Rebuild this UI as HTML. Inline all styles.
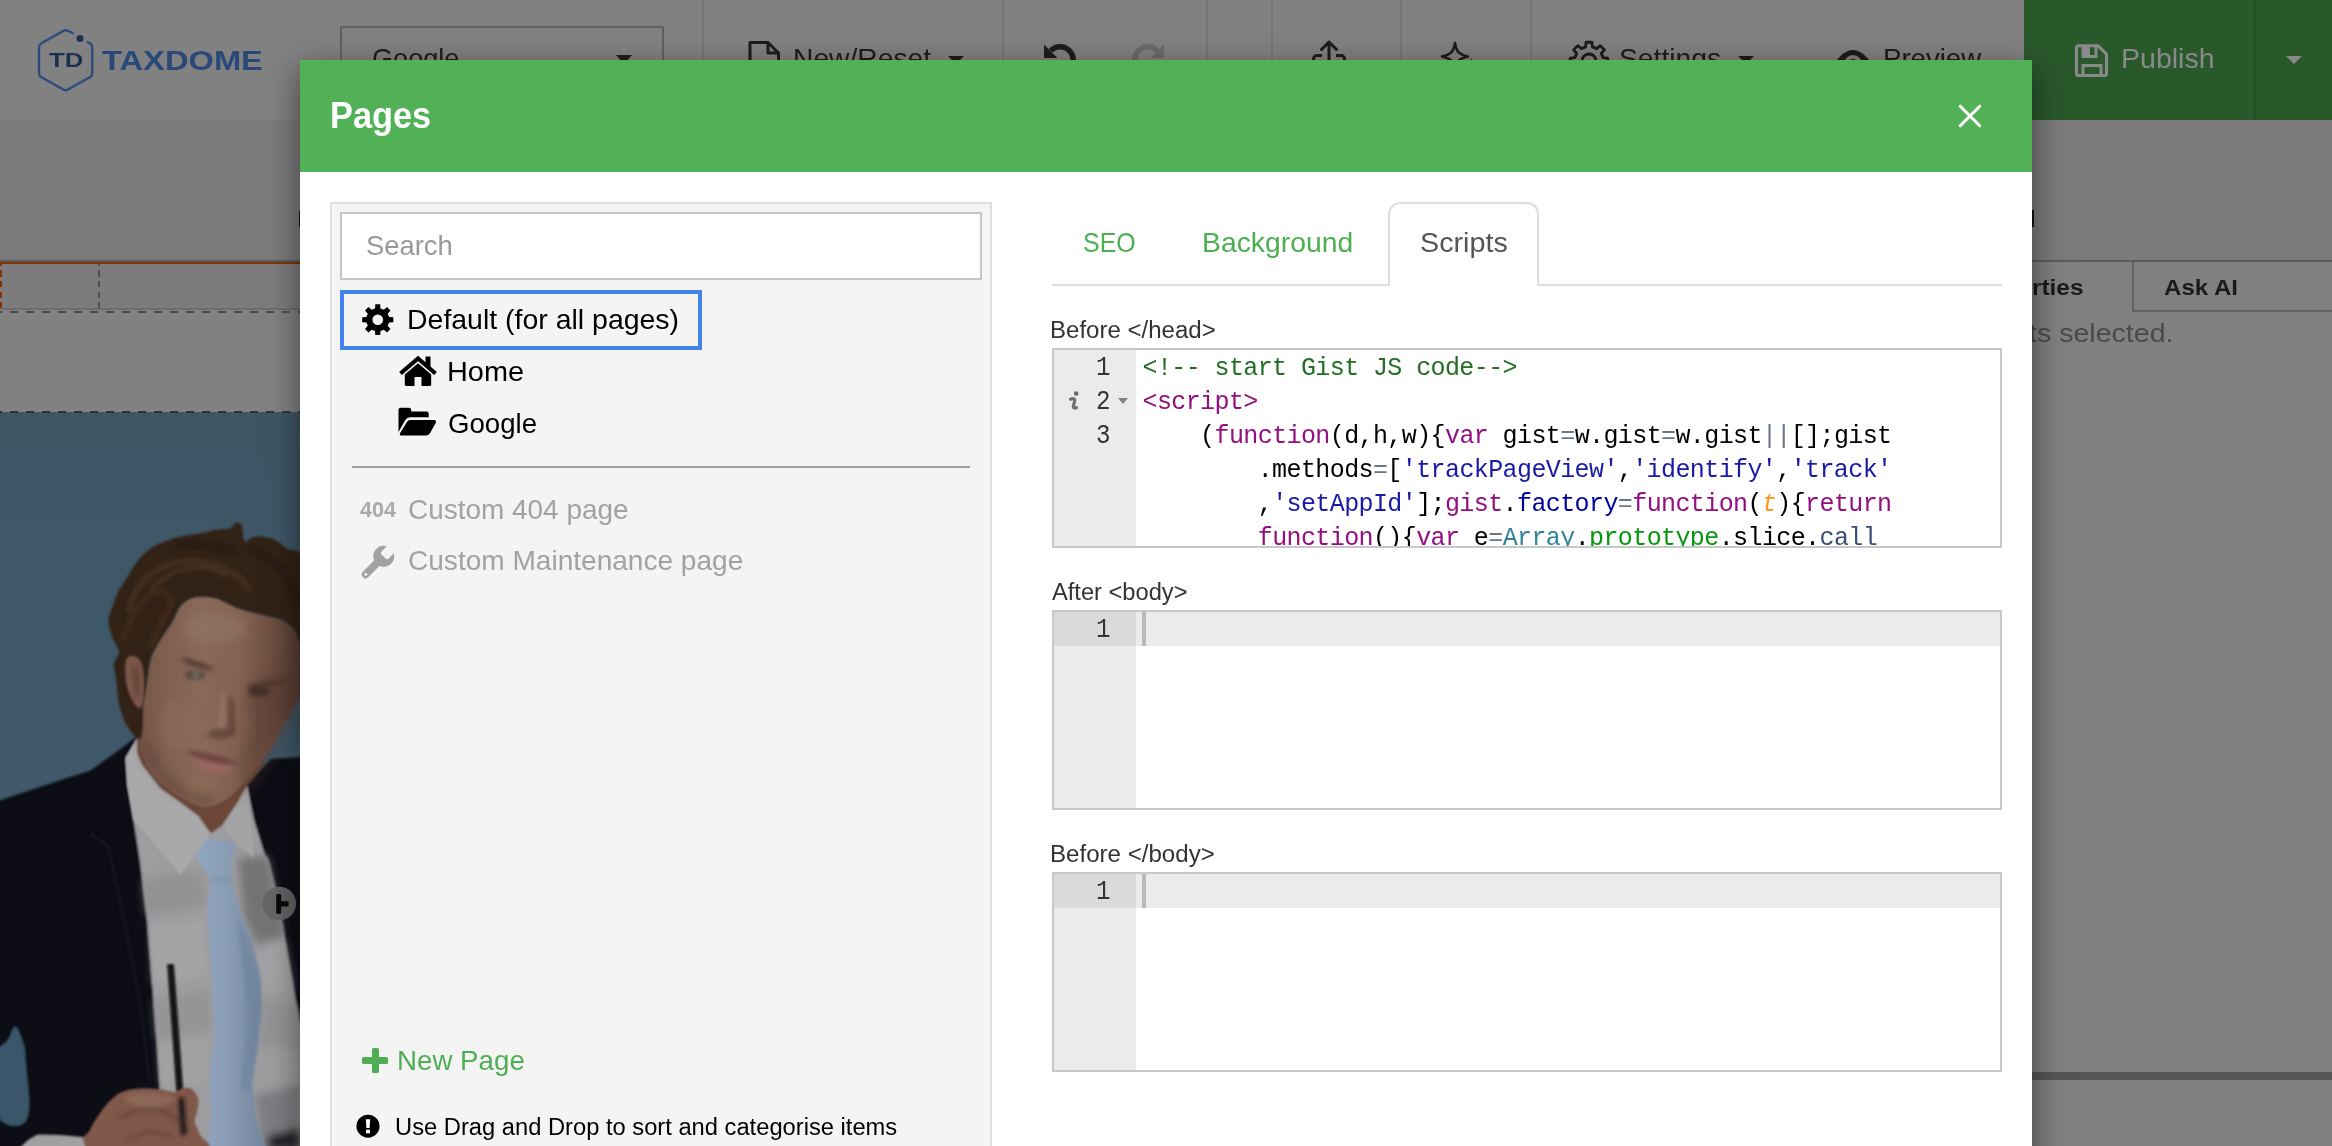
<!DOCTYPE html>
<html><head><meta charset="utf-8"><title>Pages</title>
<style>
html,body{margin:0;padding:0;overflow:hidden}
#root{position:absolute;left:0;top:0;width:2332px;height:1146px;overflow:hidden;background:#7b7b7b}
body{width:2332px;height:1146px;overflow:hidden;position:relative;background:#7b7b7b;font-family:"Liberation Sans",sans-serif}
.a{position:absolute}
.t{position:absolute;white-space:pre;line-height:1;transform-origin:0 0}
.code{position:absolute;white-space:pre;font-family:"Liberation Mono",monospace;font-size:25px;letter-spacing:-0.6px;line-height:34px;color:#000}
.code i{font-style:normal}
.c{color:#236e24} .k{color:#930f80} .s{color:#1a1aa6} .o{color:#687687} .f{color:#0000a2}
.p{color:#fd971f;font-style:italic !important} .v{color:#318495} .g{color:#06960e} .u{color:#3c4c72}
</style></head><body><div id="root">
<div class="a" style="left:0px;top:0px;width:2332px;height:120px;background:#818181;"></div>
<div class="a" style="left:702px;top:0px;width:2px;height:120px;background:#767676;"></div>
<div class="a" style="left:1002px;top:0px;width:2px;height:120px;background:#767676;"></div>
<div class="a" style="left:1206px;top:0px;width:2px;height:120px;background:#767676;"></div>
<div class="a" style="left:1271px;top:0px;width:2px;height:120px;background:#767676;"></div>
<div class="a" style="left:1400px;top:0px;width:2px;height:120px;background:#767676;"></div>
<div class="a" style="left:1530px;top:0px;width:2px;height:120px;background:#767676;"></div>
<div class="a" style="left:340px;top:26px;width:320px;height:64px;border:2px solid #606060"></div>
<div class="a" style="left:616px;top:55px;width:0;height:0;border-left:8px solid transparent;border-right:8px solid transparent;border-top:9px solid #1c1c1c"></div>
<div class="a" style="left:948px;top:56px;width:0;height:0;border-left:8px solid transparent;border-right:8px solid transparent;border-top:8px solid #1c1c1c"></div>
<div class="a" style="left:1738px;top:56px;width:0;height:0;border-left:8px solid transparent;border-right:8px solid transparent;border-top:8px solid #1c1c1c"></div>
<div class="a" style="left:2024px;top:0px;width:308px;height:120px;background:#29582b;"></div>
<div class="a" style="left:2254px;top:0px;width:2px;height:120px;background:#234e25;"></div>
<div class="a" style="left:2286px;top:56px;width:0;height:0;border-left:8px solid transparent;border-right:8px solid transparent;border-top:8px solid #8a898a"></div>
<svg class="a" style="left:0;top:0" width="2332" height="120" viewBox="0 0 2332 120"><path d="M750 42.5 h18 l10.500 10.500 v27 h-28.500z M768 42.500 v10.500 h10.500" fill="none" stroke="#1c1c1c" stroke-width="3" stroke-linejoin="round"/><path d="M1050.600 50.600 A13.250 13.250 0 1 1 1047.500 64.500" fill="none" stroke="#1c1c1c" stroke-width="5.500"/><path d="M1044 44.500 L1044 58 L1057.500 58z" fill="#1c1c1c"/><path d="M1157.400 50.600 A13.250 13.250 0 1 0 1160.500 64.500" fill="none" stroke="#6a6a6a" stroke-width="5.500"/><path d="M1164 44.500 L1164 58 L1150.500 58z" fill="#6a6a6a"/><path d="M1329 42 v22 M1321.500 49.500 l7.500 -7.500 l7.500 7.500" fill="none" stroke="#1c1c1c" stroke-width="3" stroke-linecap="round" stroke-linejoin="round"/><path d="M1322 55.500 h-5 a3.500 3.500 0 0 0 -3.500 3.500 v14 M1336 55.500 h5 a3.500 3.500 0 0 1 3.500 3.500 v14" fill="none" stroke="#1c1c1c" stroke-width="3"/><path d="M1455 43 C1456.500 52 1459 54.500 1468 56.500 C1459 58.500 1456.500 61 1455 70 C1453.500 61 1451 58.500 1442 56.500 C1451 54.500 1453.500 52 1455 43Z" fill="none" stroke="#1c1c1c" stroke-width="2.600" stroke-linejoin="round"/><path d="M1471 57 C1471.500 61 1472.500 62 1476.500 62.500 C1472.500 63 1471.500 64 1471 68 C1470.500 64 1469.500 63 1465.500 62.500 C1469.500 62 1470.500 61 1471 57Z" fill="#1c1c1c"/><path d="M1585.62 46.90 L1586.03 42.23 L1591.97 42.23 L1592.38 46.90 L1596.58 48.64 L1600.17 45.63 L1604.37 49.83 L1601.36 53.42 L1603.10 57.62 L1607.77 58.03 L1607.77 63.97 L1603.10 64.38 L1601.36 68.58 L1604.37 72.17 L1600.17 76.37 L1596.58 73.36 L1592.38 75.10 L1591.97 79.77 L1586.03 79.77 L1585.62 75.10 L1581.42 73.36 L1577.83 76.37 L1573.63 72.17 L1576.64 68.58 L1574.90 64.38 L1570.23 63.97 L1570.23 58.03 L1574.90 57.62 L1576.64 53.42 L1573.63 49.83 L1577.83 45.63 L1581.42 48.64Z M1596.00 61.00 A7 7 0 1 0 1582.00 61.00 A7 7 0 1 0 1596.00 61.00Z" fill="none" stroke="#1c1c1c" stroke-width="2.800" stroke-linejoin="round"/><path d="M1833 66 C1840 54 1847 50 1853 50 C1859 50 1866 54 1873 66 C1866 78 1859 82 1853 82 C1847 82 1840 78 1833 66Z" fill="#1c1c1c"/><circle cx="1853" cy="64" r="9" fill="#818181"/><circle cx="1853" cy="64" r="5" fill="#1c1c1c"/><path d="M2078.500 45.700 h19.500 l8.500 8.500 v19.300 a2 2 0 0 1 -2 2 h-26 a2 2 0 0 1 -2 -2 v-25.800 a2 2 0 0 1 2 -2z" fill="none" stroke="#8a898a" stroke-width="3"/><path d="M2083 46 v10.500 h13 v-10.500" fill="none" stroke="#8a898a" stroke-width="3"/><rect x="2083" y="46" width="7" height="9" fill="#8a898a"/><path d="M2083 75 v-9.500 h18 v9.500" fill="none" stroke="#8a898a" stroke-width="3"/></svg>
<svg class="a" style="left:30px;top:20px" width="80" height="80" viewBox="30 20 80 80"><path d="M72.800 33.100 L67.5 30.6 Q65.6 29.8 63.7 30.6 L41 43.5 Q39 44.8 39 47 L39 73.5 Q39 75.7 41 77 L63.7 89.8 Q65.6 90.8 67.5 89.8 L90.2 77 Q92.2 75.7 92.2 73.5 L92.2 47 Q92.2 44.8 90.2 43.5 L87.5 42" fill="none" stroke="#2a4b7b" stroke-width="2.400" stroke-linecap="round"/><circle cx="80" cy="38.5" r="3.5" fill="#1b3150"/></svg>
<div class="a" style="left:0px;top:260px;width:310px;height:2px;background:#5a5c5e;"></div>
<div class="a" style="left:0px;top:262px;width:310px;height:2px;background:#843400;"></div>
<div class="a" style="left:0px;top:264px;width:310px;height:44px;background:#7d7b7d;"></div>
<div class="a" style="left:0px;top:308px;width:310px;height:2px;background:#6c6c6c;"></div>
<div class="a" style="left:0px;top:310px;width:310px;height:102px;background:#818181;"></div>
<div class="a" style="left:0px;top:264px;width:2px;height:2px;background:#843400;"></div>
<div class="a" style="left:98px;top:264px;width:2px;height:2px;background:#4e4e50;"></div>
<div class="a" style="left:0px;top:270px;width:2px;height:6.5px;background:#843400;"></div>
<div class="a" style="left:98px;top:270px;width:2px;height:6.5px;background:#4e4e50;"></div>
<div class="a" style="left:0px;top:281px;width:2px;height:6px;background:#843400;"></div>
<div class="a" style="left:98px;top:281px;width:2px;height:6px;background:#4e4e50;"></div>
<div class="a" style="left:0px;top:291.5px;width:2px;height:6.0px;background:#843400;"></div>
<div class="a" style="left:98px;top:291.5px;width:2px;height:6.0px;background:#4e4e50;"></div>
<div class="a" style="left:0px;top:302px;width:2px;height:6px;background:#843400;"></div>
<div class="a" style="left:98px;top:302px;width:2px;height:6px;background:#4e4e50;"></div>
<div class="a" style="left:-6px;top:310.5px;width:8px;height:2.5px;background:#4d4d4d;"></div><div class="a" style="left:10px;top:310.5px;width:8px;height:2.5px;background:#4d4d4d;"></div><div class="a" style="left:26px;top:310.5px;width:8px;height:2.5px;background:#4d4d4d;"></div><div class="a" style="left:42px;top:310.5px;width:8px;height:2.5px;background:#4d4d4d;"></div><div class="a" style="left:58px;top:310.5px;width:8px;height:2.5px;background:#4d4d4d;"></div><div class="a" style="left:74px;top:310.5px;width:8px;height:2.5px;background:#4d4d4d;"></div><div class="a" style="left:90px;top:310.5px;width:8px;height:2.5px;background:#4d4d4d;"></div><div class="a" style="left:106px;top:310.5px;width:8px;height:2.5px;background:#4d4d4d;"></div><div class="a" style="left:122px;top:310.5px;width:8px;height:2.5px;background:#4d4d4d;"></div><div class="a" style="left:138px;top:310.5px;width:8px;height:2.5px;background:#4d4d4d;"></div><div class="a" style="left:154px;top:310.5px;width:8px;height:2.5px;background:#4d4d4d;"></div><div class="a" style="left:170px;top:310.5px;width:8px;height:2.5px;background:#4d4d4d;"></div><div class="a" style="left:186px;top:310.5px;width:8px;height:2.5px;background:#4d4d4d;"></div><div class="a" style="left:202px;top:310.5px;width:8px;height:2.5px;background:#4d4d4d;"></div><div class="a" style="left:218px;top:310.5px;width:8px;height:2.5px;background:#4d4d4d;"></div><div class="a" style="left:234px;top:310.5px;width:8px;height:2.5px;background:#4d4d4d;"></div><div class="a" style="left:250px;top:310.5px;width:8px;height:2.5px;background:#4d4d4d;"></div><div class="a" style="left:266px;top:310.5px;width:8px;height:2.5px;background:#4d4d4d;"></div><div class="a" style="left:282px;top:310.5px;width:8px;height:2.5px;background:#4d4d4d;"></div><div class="a" style="left:298px;top:310.5px;width:8px;height:2.5px;background:#4d4d4d;"></div>
<svg class="a" style="left:0;top:412px" width="300" height="734" viewBox="0 0 300 734"><defs><filter id="b1" x="-10%" y="-10%" width="120%" height="120%"><feGaussianBlur stdDeviation="0.9"/></filter><filter id="b2" x="-20%" y="-20%" width="140%" height="140%"><feGaussianBlur stdDeviation="2.2"/></filter><filter id="b3" x="-30%" y="-30%" width="160%" height="160%"><feGaussianBlur stdDeviation="4.5"/></filter><filter id="b6" x="-40%" y="-40%" width="180%" height="180%"><feGaussianBlur stdDeviation="9"/></filter><linearGradient id="bgg" x1="0" y1="0" x2="0" y2="1"><stop offset="0" stop-color="#3e5564"/><stop offset=".5" stop-color="#3f596b"/><stop offset="1" stop-color="#3c586b"/></linearGradient><linearGradient id="tieg" x1="0" y1="0" x2="1" y2="0"><stop offset="0" stop-color="#94a7c0"/><stop offset=".45" stop-color="#8a9db6"/><stop offset="1" stop-color="#71849b"/></linearGradient><linearGradient id="faceg" x1="0" y1="0" x2="1" y2="0"><stop offset="0" stop-color="#785749"/><stop offset=".35" stop-color="#896858"/><stop offset=".6" stop-color="#856353"/><stop offset=".8" stop-color="#6f5043"/><stop offset="1" stop-color="#553b32"/></linearGradient><clipPath id="cp"><rect x="0" y="0" width="300" height="734"/></clipPath></defs><g clip-path="url(#cp)"><rect x="0" y="0" width="300" height="734" fill="url(#bgg)"/><g filter="url(#b1)"><path fill="#0c0d15" d="M-5.0 390.0 L34.0 377.0 L67.0 366.0 L90.0 358.7 L118.0 339.0 L135.4 325.6 L150.0 324.0 L240.0 378.0 L271.0 347.0 L305.0 345.0 L305.0 738.0 L-5.0 738.0Z"/><path fill="#3b576a" d="M-4.0 646.0 C-1.6 631.2 4.2 634.2 8.0 628.0 C11.8 621.8 12.2 615.0 15.0 615.0 C17.8 615.0 19.9 621.4 22.0 628.0 C24.1 634.6 24.6 632.1 25.5 648.0 C26.4 663.9 32.4 696.8 26.5 707.6 C20.6 718.4 2.1 714.3 -4.0 702.0 C-10.1 689.7 -6.4 660.8 -4.0 646.0Z"/><path fill="#9d9da0" d="M125.8 346.0 L127.5 373.0 L133.6 408.0 L139.8 448.0 L147.3 510.0 L152.3 573.0 L157.2 635.0 L159.7 675.0 L160.0 738.0 L305.0 738.0 L305.0 628.0 L299.5 608.0 L289.5 553.0 L282.0 510.0 L274.6 473.0 L268.3 448.0 L264.5 442.0 L254.0 408.0 L247.0 374.0 L235.0 388.0 L137.0 327.0Z"/></g><g filter="url(#b3)"><path fill="#8a8a8d" opacity=".6" d="M142.0 468.0 L200.0 460.0 L205.0 493.0 L146.0 503.0Z"/><path fill="#acacae" opacity=".5" d="M150.0 513.0 L205.0 508.0 L208.0 563.0 L153.0 573.0Z"/><path fill="#8e8e91" opacity=".55" d="M153.0 588.0 L210.0 578.0 L212.0 618.0 L156.0 628.0Z"/><path fill="#a8a8aa" opacity=".4" d="M158.0 633.0 L210.0 628.0 L210.0 673.0 L160.0 673.0Z"/><path fill="#6e6c6d" opacity=".85" d="M238.0 446.0 L268.0 444.0 L284.0 523.0 L258.0 538.0 L244.0 503.0Z"/><path fill="#a9a9ab" opacity=".45" d="M256.0 528.0 L286.0 528.0 L295.0 578.0 L262.0 578.0Z"/><path fill="#8c8c8f" opacity=".55" d="M262.0 588.0 L300.0 598.0 L300.0 638.0 L260.0 633.0Z"/><path fill="#77777a" opacity=".8" d="M255.0 683.0 L300.0 673.0 L300.0 734.0 L262.0 734.0Z"/><path fill="#15161c" opacity=".9" d="M268.0 724.0 L300.0 716.0 L300.0 738.0 L266.0 738.0Z"/></g><g filter="url(#b1)"><path fill="#6c4637" d="M137.0 327.0 L137.0 341.0 L142.0 353.0 L160.0 376.0 L177.0 388.0 L198.0 404.0 L210.4 421.5 L222.6 413.0 L238.0 390.0 L247.0 374.0 L264.0 352.0 L260.0 328.0 L150.0 313.0Z"/><path fill="#a9a9ac" d="M137.0 327.0 L125.8 346.0 L127.5 373.0 L133.6 408.0 L180.7 462.5 L194.7 444.0 L206.9 427.0 L210.4 421.5 L198.0 404.0 L160.0 376.0 L142.0 353.0 L137.0 341.0Z"/><path fill="#a4a4a7" d="M247.0 374.0 L254.0 446.0 L234.8 430.0 L222.6 414.0 L238.0 390.0Z"/><path fill="url(#tieg)" d="M194.7 444.0 L206.9 426.8 L234.8 430.0 L232.0 448.0 L231.0 466.7 L239.6 498.0 L252.0 528.0 L260.8 568.0 L262.0 598.0 L257.0 635.0 L252.0 672.6 L257.0 710.0 L267.0 738.0 L207.0 738.0 L211.0 697.6 L209.7 660.0 L214.6 622.7 L212.2 573.0 L207.2 498.0 L210.9 468.0 L200.0 450.0Z"/></g><g filter="url(#b2)"><path fill="none" stroke="#6d829c" stroke-width="2" opacity=".8" d="M211 468 L231 467"/><path fill="#6b8099" opacity=".55" d="M236.0 503.0 L250.0 533.0 L258.0 573.0 L259.0 628.0 L250.0 678.0 L240.0 678.0 L246.0 618.0 L244.0 568.0Z"/></g><g filter="url(#b1)"><path fill="url(#faceg)" d="M147.6 264.0 C149.0 255.8 148.9 251.0 151.0 245.0 C153.1 239.0 156.5 233.8 160.0 228.0 C163.5 222.2 168.5 215.8 172.0 210.0 C175.5 204.2 177.2 197.2 181.0 193.0 C184.8 188.8 189.2 186.2 195.0 185.0 C200.8 183.8 208.8 184.2 216.0 186.0 C223.2 187.8 230.0 193.2 238.0 196.0 C246.0 198.8 256.7 201.0 264.0 203.0 C271.3 205.0 277.0 205.7 282.0 208.0 C287.0 210.3 290.7 213.7 294.0 217.0 C297.3 220.3 300.7 218.2 302.0 228.0 C303.3 237.8 303.0 265.5 302.0 276.0 C301.0 286.5 298.5 285.7 296.0 291.0 C293.5 296.3 290.5 301.7 287.0 308.0 C283.5 314.3 278.8 322.7 275.0 329.0 C271.2 335.3 269.2 339.7 264.5 346.0 C259.8 352.3 252.1 361.2 247.0 367.0 C241.9 372.8 238.2 377.2 234.0 381.0 C229.8 384.8 226.8 387.7 222.0 390.0 C217.2 392.3 210.7 395.2 205.0 395.0 C199.3 394.8 194.3 392.2 188.0 389.0 C181.7 385.8 173.3 381.0 167.0 376.0 C160.7 371.0 154.3 365.0 150.0 359.0 C145.7 353.0 142.6 346.5 141.0 340.0 C139.4 333.5 140.4 327.7 140.6 320.0 C140.8 312.3 141.1 303.3 142.3 294.0 C143.5 284.7 146.2 272.2 147.6 264.0Z"/></g><g filter="url(#b3)"><ellipse cx="215" cy="216" rx="30" ry="16" fill="#927666" opacity=".6"/><ellipse cx="178" cy="313" rx="18" ry="26" fill="#8d6c5c" opacity=".5"/></g><g filter="url(#b6)"><path fill="#553a31" opacity=".55" d="M246.0 278.0 L300.0 248.0 L300.0 288.0 L275.0 333.0 L250.0 373.0 L238.0 388.0 L240.0 348.0 L250.0 318.0Z"/></g><g filter="url(#b3)"><path fill="#5e4035" opacity=".5" d="M140.0 323.0 L150.0 328.0 L165.0 358.0 L192.0 380.0 L222.0 384.0 L205.0 396.0 L170.0 380.0 L142.0 348.0Z"/><ellipse cx="203" cy="374" rx="18" ry="8" fill="#8c6757" opacity=".5"/></g><g filter="url(#b2)"><path fill="#5f4137" opacity=".75" d="M224.0 278.0 L234.0 288.0 L236.0 323.0 L222.0 328.0 L206.0 324.0 L212.0 318.0 L226.0 316.0Z"/><path fill="#a07b6a" opacity=".6" d="M222.0 278.0 L228.0 280.0 L227.0 316.0 L218.0 316.0Z"/><path fill="#6a403b" opacity=".95" d="M187.0 339.0 C188.7 338.3 199.2 340.0 205.0 341.0 C210.8 342.0 216.5 343.3 222.0 345.0 C227.5 346.7 237.0 349.7 238.0 351.0 C239.0 352.3 233.0 353.3 228.0 353.0 C223.0 352.7 213.5 350.3 208.0 349.0 C202.5 347.7 198.5 346.7 195.0 345.0 C191.5 343.3 185.3 339.7 187.0 339.0Z"/><path fill="#99675f" opacity=".9" d="M193.0 345.0 C193.8 343.5 203.3 348.5 210.0 350.0 C216.7 351.5 230.7 352.2 233.0 354.0 C235.3 355.8 228.7 360.2 224.0 361.0 C219.3 361.8 210.2 361.7 205.0 359.0 C199.8 356.3 192.2 346.5 193.0 345.0Z"/><path fill="#4c3329" opacity=".85" d="M181.0 246.0 C181.3 245.2 188.0 247.0 192.0 248.0 C196.0 249.0 201.3 250.3 205.0 252.0 C208.7 253.7 214.2 257.2 214.0 258.0 C213.8 258.8 208.0 257.8 204.0 257.0 C200.0 256.2 193.8 254.8 190.0 253.0 C186.2 251.2 180.7 246.8 181.0 246.0Z"/><path fill="#4c3329" opacity=".8" d="M246.0 275.0 C246.7 273.7 254.7 271.2 260.0 270.0 C265.3 268.8 273.7 268.0 278.0 268.0 C282.3 268.0 287.0 269.0 286.0 270.0 C285.0 271.0 277.0 272.7 272.0 274.0 C267.0 275.3 260.3 277.8 256.0 278.0 C251.7 278.2 245.3 276.3 246.0 275.0Z"/><ellipse cx="195" cy="263" rx="10" ry="4.5" fill="#4a3a33" opacity=".9"/><ellipse cx="196" cy="263" rx="4" ry="3.2" fill="#6b7468" opacity=".9"/><ellipse cx="259" cy="280" rx="11" ry="4.5" fill="#3d2c26" opacity=".9"/></g><g filter="url(#b1)"><path fill="#302019" d="M108.3 208.4 C108.3 203.7 111.2 198.7 112.7 194.4 C114.2 190.1 115.9 184.2 118.0 180.0 C120.1 175.8 124.2 170.4 126.6 166.5 C129.0 162.6 131.6 157.4 134.0 154.0 C136.4 150.6 139.9 146.3 142.3 143.8 C144.7 141.2 147.4 138.8 150.0 137.0 C152.6 135.2 155.7 133.3 159.8 131.6 C163.9 129.9 172.7 126.8 177.2 125.5 C181.7 124.2 186.1 123.7 190.0 123.0 C193.9 122.3 199.6 121.9 203.4 121.1 C207.2 120.3 211.7 118.3 215.6 117.7 C219.5 117.1 226.5 117.8 229.6 116.8 C232.7 115.7 234.7 111.1 236.5 110.7 C238.3 110.3 240.6 111.5 241.8 114.2 C243.0 116.9 242.4 127.4 244.5 129.0 C246.6 130.6 251.4 124.9 255.7 124.6 C260.0 124.3 268.5 125.5 273.2 127.3 C277.9 129.1 282.6 133.5 287.1 136.8 C291.6 140.1 300.6 135.0 303.0 149.0 C305.4 163.0 304.4 219.8 303.0 230.0 C301.6 240.2 297.1 220.3 294.0 217.0 C290.9 213.7 286.5 210.1 282.0 208.0 C277.5 205.9 270.6 204.8 264.0 203.0 C257.4 201.2 245.2 198.6 238.0 196.0 C230.8 193.4 222.4 187.7 216.0 186.0 C209.6 184.3 200.2 183.9 195.0 185.0 C189.8 186.1 184.4 189.2 181.0 193.0 C177.6 196.8 175.2 204.8 172.0 210.0 C168.8 215.2 163.2 222.8 160.0 228.0 C156.8 233.2 152.9 239.6 151.0 245.0 C149.1 250.4 148.5 258.4 147.6 264.0 C146.7 269.6 145.7 277.5 145.0 282.0 C144.3 286.5 143.4 287.9 143.0 294.0 C142.6 300.1 143.1 318.4 142.0 323.0 C140.9 327.6 138.4 326.6 136.0 325.0 C133.6 323.4 128.6 316.9 126.0 312.0 C123.5 307.1 120.4 298.3 119.0 292.0 C117.6 285.7 117.2 276.0 116.5 270.0 C115.8 264.0 113.6 256.5 114.0 252.0 C114.4 247.5 119.2 243.9 119.0 240.0 C118.8 236.1 114.3 230.7 112.7 226.0 C111.1 221.3 108.3 213.1 108.3 208.4Z"/></g><g filter="url(#b2)"><path fill="none" stroke="#47311f" stroke-width="6" opacity=".85" d="M128.0 200.0 C130.0 195.5 133.8 180.7 140.0 173.0 C146.2 165.3 155.0 157.8 165.0 154.0 C175.0 150.2 188.8 149.0 200.0 150.0 C211.2 151.0 223.7 155.3 232.0 160.0 C240.3 164.7 247.0 175.0 250.0 178.0"/><path fill="none" stroke="#553c28" stroke-width="3" opacity=".75" d="M150.0 178.0 C154.2 175.0 165.8 163.7 175.0 160.0 C184.2 156.3 196.2 155.3 205.0 156.0 C213.8 156.7 224.2 162.7 228.0 164.0"/><path fill="none" stroke="#432d1d" stroke-width="5" opacity=".8" d="M122.0 228.0 C124.2 223.3 129.5 208.0 135.0 200.0 C140.5 192.0 148.8 182.0 155.0 180.0 C161.2 178.0 171.2 182.5 172.0 188.0 C172.8 193.5 163.7 205.0 160.0 213.0 C156.3 221.0 151.7 232.2 150.0 236.0"/><path fill="none" stroke="#24150e" stroke-width="6" opacity=".8" d="M250.0 136.0 C253.3 138.0 263.7 142.7 270.0 148.0 C276.3 153.3 283.3 160.5 288.0 168.0 C292.7 175.5 296.3 188.8 298.0 193.0"/><path fill="none" stroke="#24150e" stroke-width="5" opacity=".7" d="M175.0 133.0 C180.0 133.0 195.0 131.8 205.0 133.0 C215.0 134.2 230.0 138.8 235.0 140.0"/></g><g filter="url(#b1)"><path fill="#7c5749" d="M126.0 248.0 C127.2 243.7 130.5 243.7 133.0 244.0 C135.5 244.3 139.2 246.0 141.0 250.0 C142.8 254.0 143.7 261.3 144.0 268.0 C144.3 274.7 143.8 285.3 143.0 290.0 C142.2 294.7 140.8 296.3 139.0 296.0 C137.2 295.7 134.2 292.3 132.0 288.0 C129.8 283.7 127.0 276.7 126.0 270.0 C125.0 263.3 124.8 252.3 126.0 248.0Z"/></g><g filter="url(#b2)"><path fill="#5e3f34" opacity=".7" d="M132.0 254.0 C132.7 250.3 136.7 253.0 138.0 256.0 C139.3 259.0 140.0 267.0 140.0 272.0 C140.0 277.0 139.0 285.0 138.0 286.0 C137.0 287.0 135.0 283.3 134.0 278.0 C133.0 272.7 131.3 257.7 132.0 254.0Z"/></g><g filter="url(#b1)"><path fill="#121216" d="M167.2 553.5 L168.0 552.0 L173.3 552.0 L174.0 553.5 L186.5 722.0 L179.5 723.0Z"/><path fill="#80594a" d="M84.0 738.0 C65.5 734.7 87.8 723.5 90.0 718.0 C92.2 712.5 94.5 709.3 97.3 705.0 C100.1 700.7 103.7 695.7 107.0 692.0 C110.3 688.3 113.8 684.9 117.3 682.6 C120.8 680.3 124.2 679.0 128.0 678.0 C131.8 677.0 134.8 676.6 139.8 676.4 C144.8 676.2 152.2 676.4 158.0 677.0 C163.8 677.6 170.4 680.2 174.7 680.0 C179.0 679.8 181.1 676.4 184.0 676.0 C186.9 675.6 189.8 675.7 192.2 677.6 C194.6 679.5 197.6 683.9 198.4 687.6 C199.2 691.3 197.6 696.3 197.0 700.0 C196.4 703.7 194.2 706.2 194.7 710.0 C195.1 713.8 198.6 717.9 199.7 722.6 C200.8 727.3 220.3 735.4 201.0 738.0 C181.7 740.6 102.5 741.3 84.0 738.0Z"/><path fill="#a0a0a3" d="M17.5 738.0 L28.0 728.0 L37.4 722.6 L60.0 723.0 L82.4 725.0 L86.0 738.0Z"/></g><g filter="url(#b2)"><path fill="none" stroke="#5c3d32" stroke-width="3" opacity=".8" d="M120.0 706.0 C123.3 704.7 132.5 699.0 140.0 698.0 C147.5 697.0 158.0 697.7 165.0 700.0 C172.0 702.3 179.2 710.0 182.0 712.0"/><path fill="none" stroke="#5c3d32" stroke-width="3" opacity=".7" d="M128.0 728.0 C131.7 726.7 142.7 720.7 150.0 720.0 C157.3 719.3 168.3 723.3 172.0 724.0"/><path fill="#95705f" opacity=".6" d="M125.0 684.0 C127.5 681.8 141.7 680.7 150.0 681.0 C158.3 681.3 173.3 683.8 175.0 686.0 C176.7 688.2 166.7 692.7 160.0 694.0 C153.3 695.3 140.8 695.7 135.0 694.0 C129.2 692.3 122.5 686.2 125.0 684.0Z"/><path fill="#121216" d="M178.5 686.0 L183.8 685.5 L186.5 722.0 L181.0 723.0Z"/></g><g filter="url(#b2)"><path fill="none" stroke="#1a1c26" stroke-width="2" opacity=".9" d="M88 420 L108 434 L120 488 L140 588 L150 673"/></g><circle cx="279.300" cy="491.5" r="16.800" fill="#656565" opacity=".97"/><rect x="276.200" y="482" width="5" height="19.700" rx="1" fill="#0a0a0a"/><rect x="279" y="489.20000000000005" width="9.700" height="5.200" rx="1" fill="#0a0a0a"/></g></svg>
<div class="a" style="left:-6px;top:411px;width:8px;height:2px;background:#2e3438;"></div><div class="a" style="left:10px;top:411px;width:8px;height:2px;background:#2e3438;"></div><div class="a" style="left:26px;top:411px;width:8px;height:2px;background:#2e3438;"></div><div class="a" style="left:42px;top:411px;width:8px;height:2px;background:#2e3438;"></div><div class="a" style="left:58px;top:411px;width:8px;height:2px;background:#2e3438;"></div><div class="a" style="left:74px;top:411px;width:8px;height:2px;background:#2e3438;"></div><div class="a" style="left:90px;top:411px;width:8px;height:2px;background:#2e3438;"></div><div class="a" style="left:106px;top:411px;width:8px;height:2px;background:#2e3438;"></div><div class="a" style="left:122px;top:411px;width:8px;height:2px;background:#2e3438;"></div><div class="a" style="left:138px;top:411px;width:8px;height:2px;background:#2e3438;"></div><div class="a" style="left:154px;top:411px;width:8px;height:2px;background:#2e3438;"></div><div class="a" style="left:170px;top:411px;width:8px;height:2px;background:#2e3438;"></div><div class="a" style="left:186px;top:411px;width:8px;height:2px;background:#2e3438;"></div><div class="a" style="left:202px;top:411px;width:8px;height:2px;background:#2e3438;"></div><div class="a" style="left:218px;top:411px;width:8px;height:2px;background:#2e3438;"></div><div class="a" style="left:234px;top:411px;width:8px;height:2px;background:#2e3438;"></div><div class="a" style="left:250px;top:411px;width:8px;height:2px;background:#2e3438;"></div><div class="a" style="left:266px;top:411px;width:8px;height:2px;background:#2e3438;"></div><div class="a" style="left:282px;top:411px;width:8px;height:2px;background:#2e3438;"></div><div class="a" style="left:298px;top:411px;width:8px;height:2px;background:#2e3438;"></div>
<div class="a" style="left:1900px;top:262px;width:432px;height:884px;background:#808080;"></div>
<div class="a" style="left:1900px;top:260px;width:432px;height:2px;background:#5c5c5c;"></div>
<div class="a" style="left:2132px;top:262px;width:2px;height:50px;background:#636363;"></div>
<div class="a" style="left:2132px;top:310px;width:200px;height:2px;background:#636363;"></div>
<div class="a" style="left:1900px;top:1072px;width:432px;height:8px;background:#555;"></div>
<div class="a" style="left:298.5px;top:211px;width:2px;height:16px;background:#151515;"></div>
<div class="a" style="left:2030px;top:210px;width:4px;height:17px;background:#111;"></div>
<span class="t" style="left:371.6px;top:45.3px;font-size:28px;font-weight:400;color:#1c1c1c;font-family:'Liberation Sans';transform:scaleX(0.9683);">Google</span><span class="t" style="left:792.7px;top:45.3px;font-size:28px;font-weight:400;color:#1c1c1c;font-family:'Liberation Sans';transform:scaleX(1.0083);">New/Reset</span><span class="t" style="left:1618.7px;top:45.3px;font-size:28px;font-weight:400;color:#1c1c1c;font-family:'Liberation Sans';transform:scaleX(1.0103);">Settings</span><span class="t" style="left:1882.8px;top:45.3px;font-size:28px;font-weight:400;color:#1c1c1c;font-family:'Liberation Sans';transform:scaleX(0.9852);">Preview</span><span class="t" style="left:2121.1px;top:44.9px;font-size:28px;font-weight:400;color:#8a898a;font-family:'Liberation Sans';transform:scaleX(1.0190);">Publish</span><span class="t" style="left:2031.9px;top:276.9px;font-size:22.6px;font-weight:700;color:#1a1a1a;font-family:'Liberation Sans';transform:scaleX(1.0788);">rties</span><span class="t" style="left:2163.9px;top:276.9px;font-size:22.6px;font-weight:700;color:#1a1a1a;font-family:'Liberation Sans';transform:scaleX(1.0660);">Ask AI</span><span class="t" style="left:2029.1px;top:319.6px;font-size:26.5px;font-weight:400;color:#4a4a4a;font-family:'Liberation Sans';transform:scaleX(1.0776);">ts selected.</span><span class="t" style="left:49.1px;top:50.2px;font-size:20.6px;font-weight:700;color:#1b3150;font-family:'Liberation Sans';transform:scaleX(1.2470);">TD</span><span class="t" style="left:102.3px;top:47.0px;font-size:27.6px;font-weight:700;color:#294978;font-family:'Liberation Sans';transform:scaleX(1.1838);">TAXDOME</span>
<div class="a" style="left:300px;top:60px;width:1732px;height:1200px;background:#fff;box-shadow:0 10px 30px rgba(0,0,0,.5)"></div>
<div class="a" style="left:300px;top:60px;width:1732px;height:112px;background:#52b157;"></div>
<svg class="a" style="left:1955px;top:100.600px" width="30" height="30" viewBox="0 0 30 30"><path d="M5.200 5.200 L24.800 24.800 M24.800 5.200 L5.200 24.800" stroke="#fff" stroke-width="3" stroke-linecap="round" fill="none"/></svg>
<div class="a" style="left:330px;top:202px;width:658px;height:1000px;background:#f4f4f4;border:2px solid #e0e0e0"></div>
<div class="a" style="left:340px;top:212px;width:638px;height:64px;background:#fff;border:2px solid #c6c6c6"></div>
<div class="a" style="left:340px;top:290px;width:354px;height:52px;border:4px solid #4283ee"></div>
<svg class="a" style="left:362px;top:303.5px" width="31.5" height="31.5" viewBox="0 0 31.5 31.5"><path d="M13.03 4.42 L13.29 0.19 L18.21 0.19 L18.47 4.42 L21.84 5.81 L25.01 3.01 L28.49 6.49 L25.69 9.66 L27.08 13.03 L31.31 13.29 L31.31 18.21 L27.08 18.47 L25.69 21.84 L28.49 25.01 L25.01 28.49 L21.84 25.69 L18.47 27.08 L18.21 31.31 L13.29 31.31 L13.03 27.08 L9.66 25.69 L6.49 28.49 L3.01 25.01 L5.81 21.84 L4.42 18.47 L0.19 18.21 L0.19 13.29 L4.42 13.03 L5.81 9.66 L3.01 6.49 L6.49 3.01 L9.66 5.81Z M21.11 15.75 A5.355 5.355 0 1 0 10.39 15.75 A5.355 5.355 0 1 0 21.11 15.75Z" fill="#000" fill-rule="evenodd"/></svg>
<svg class="a" style="left:397px;top:354px" width="44" height="36" viewBox="-2 -2 44 36"><path d="M1.500 17.500 L19 2.500 L36.500 17.500" fill="none" stroke="#000" stroke-width="4.200" stroke-linejoin="miter"/><rect x="26.500" y="0.500" width="5" height="10" fill="#000"/><path d="M5.800 18.500 L19 7.300 L32.200 18.500 L32.200 28.500 Q32.200 30 30.700 30 L22.500 30 L22.500 21 L15.500 21 L15.500 30 L7.300 30 Q5.800 30 5.800 28.500Z" fill="#000"/></svg>
<svg class="a" style="left:398px;top:407px" width="40" height="30" viewBox="0 0 40 30"><path d="M0.500 25 L0.500 3 Q0.500 0.800 2.700 0.800 L11 0.800 Q13.200 0.800 13.200 3 L13.200 4.600 L28.500 4.600 Q30.700 4.600 30.700 6.800 L30.700 10.200 L12 10.200 Q9 10.200 7.300 13 Z" fill="#000"/><path d="M3.500 28.500 L28 28.500 Q30.500 28.500 32 26.200 L37.800 15.800 Q38.800 13 36 13 L12.500 13 Q10 13 8.700 15.200 L2 26.200 Q1.200 28.500 3.500 28.500Z" fill="#000"/></svg>
<div class="a" style="left:352px;top:466px;width:618px;height:2px;background:#9e9e9e;"></div>
<svg class="a" style="left:360px;top:544px" width="36" height="36" viewBox="0 0 36 36"><path d="M5.500 30.500 L21 15" stroke="#a2a2a2" stroke-width="7.500" stroke-linecap="round" fill="none"/><path d="M33.800 9.200 L27.800 15.200 L22.500 13.500 L20.800 8.200 L26.800 2.200 A10.500 10.500 0 1 0 33.800 9.200Z" fill="#a2a2a2"/><circle cx="5.800" cy="30.200" r="1.500" fill="#f4f4f4"/></svg>
<div class="a" style="left:371.500px;top:1047.500px;width:7px;height:25.500px;background:#4fae54;border-radius:1.500px"></div>
<div class="a" style="left:362px;top:1056.700px;width:26px;height:7px;background:#4fae54;border-radius:1.500px"></div>
<svg class="a" style="left:356px;top:1114px" width="24" height="24" viewBox="0 0 24 24"><circle cx="12" cy="12.200" r="11.500" fill="#000"/><path d="M9.800 5.200 h4.400 l-0.600 8.800 h-3.200z" fill="#fff"/><rect x="10" y="15.700" width="4" height="3.600" fill="#fff"/></svg>
<div class="a" style="left:1052px;top:284px;width:950px;height:2px;background:#ddd;"></div>
<div class="a" style="left:1388px;top:202px;width:147px;height:82px;border:2px solid #ddd;border-bottom:none;border-radius:12px 12px 0 0;background:#fff;box-sizing:content-box"></div>
<div class="a" style="left:1052px;top:348px;width:946px;height:196px;border:2px solid #c8c8c8;background:#fff"></div><div class="a" style="left:1054px;top:350px;width:82px;height:196px;background:#ebebeb;"></div><div class="a" style="left:1054px;top:350px;width:946px;height:196px;overflow:hidden"><span class="code" style="left:41.500px;top:1px;color:#333;font-size:27.700px;letter-spacing:0;transform:scaleX(.87);transform-origin:0 0">1</span><span class="code" style="left:41.500px;top:35px;color:#333;font-size:27.700px;letter-spacing:0;transform:scaleX(.87);transform-origin:0 0">2</span><span class="code" style="left:41.500px;top:69px;color:#333;font-size:27.700px;letter-spacing:0;transform:scaleX(.87);transform-origin:0 0">3</span><svg class="a" style="left:12px;top:38px" width="16" height="24" viewBox="0 0 16 24"><g filter="url(#ib)"><circle cx="10.200" cy="5.600" r="2.300" fill="#6a6a6a"/><path d="M4.500 11.200 Q8.500 9.800 8.800 12 Q8.300 15 7.300 18.200 Q7 20.600 10.500 19.600" fill="none" stroke="#6f6f6f" stroke-width="3.200" stroke-linecap="round"/></g><defs><filter id="ib"><feGaussianBlur stdDeviation=".45"/></filter></defs></svg><div class="a" style="left:64px;top:48px;width:0;height:0;border-left:5px solid transparent;border-right:5px solid transparent;border-top:6px solid #808080"></div><span class="code" style="left:88.500px;top:1.5px"><i class="c">&lt;!-- start Gist JS code--&gt;</i></span><span class="code" style="left:88.500px;top:35.5px"><i class="k">&lt;script&gt;</i></span><span class="code" style="left:88.500px;top:69.5px">    (<i class="k">function</i>(d,h,w){<i class="k">var</i> gist<i class="o">=</i>w.gist<i class="o">=</i>w.gist<i class="o">||</i>[];gist</span><span class="code" style="left:88.500px;top:103.5px">        .methods<i class="o">=</i>[<i class="s">'trackPageView'</i>,<i class="s">'identify'</i>,<i class="s">'track'</i></span><span class="code" style="left:88.500px;top:137.5px">        ,<i class="s">'setAppId'</i>];<i class="k">gist</i>.<i class="f">factory</i><i class="o">=</i><i class="k">function</i>(<i class="p">t</i>){<i class="k">return</i></span><span class="code" style="left:88.500px;top:171.5px">        <i class="k">function</i>(){<i class="k">var</i> e<i class="o">=</i><i class="v">Array</i>.<i class="g">prototype</i>.slice.<i class="u">call</i></span></div>
<div class="a" style="left:1052px;top:610px;width:946px;height:196px;border:2px solid #c8c8c8;background:#fff"></div><div class="a" style="left:1054px;top:612px;width:82px;height:196px;background:#ebebeb;"></div><div class="a" style="left:1054px;top:612px;width:82px;height:34px;background:#dadada;"></div><div class="a" style="left:1136px;top:612px;width:864px;height:34px;background:#ebebeb;"></div><div class="a" style="left:1142px;top:612px;width:4px;height:34px;background:#b9b9b9;"></div><span class="code" style="left:1095.500px;top:613px;color:#333;font-size:27.700px;letter-spacing:0;transform:scaleX(.87);transform-origin:0 0">1</span>
<div class="a" style="left:1052px;top:872px;width:946px;height:196px;border:2px solid #c8c8c8;background:#fff"></div><div class="a" style="left:1054px;top:874px;width:82px;height:196px;background:#ebebeb;"></div><div class="a" style="left:1054px;top:874px;width:82px;height:34px;background:#dadada;"></div><div class="a" style="left:1136px;top:874px;width:864px;height:34px;background:#ebebeb;"></div><div class="a" style="left:1142px;top:874px;width:4px;height:34px;background:#b9b9b9;"></div><span class="code" style="left:1095.500px;top:875px;color:#333;font-size:27.700px;letter-spacing:0;transform:scaleX(.87);transform-origin:0 0">1</span>
<span class="t" style="left:329.8px;top:97.7px;font-size:36px;font-weight:700;color:#fff;font-family:'Liberation Sans';transform:scaleX(0.9529);">Pages</span><span class="t" style="left:365.6px;top:232.3px;font-size:28px;font-weight:400;color:#999;font-family:'Liberation Sans';transform:scaleX(0.9781);">Search</span><span class="t" style="left:406.9px;top:305.7px;font-size:27.5px;font-weight:400;color:#000;font-family:'Liberation Sans';transform:scaleX(1.0349);">Default (for all pages)</span><span class="t" style="left:447.2px;top:357.7px;font-size:27.5px;font-weight:400;color:#000;font-family:'Liberation Sans';transform:scaleX(1.0502);">Home</span><span class="t" style="left:447.8px;top:409.5px;font-size:27.5px;font-weight:400;color:#000;font-family:'Liberation Sans';transform:scaleX(1.0044);">Google</span><span class="t" style="left:359.7px;top:500.1px;font-size:21.5px;font-weight:700;color:#aaa;font-family:'Liberation Sans';transform:scaleX(1.0035);">404</span><span class="t" style="left:407.9px;top:495.5px;font-size:27.5px;font-weight:400;color:#a2a2a2;font-family:'Liberation Sans';transform:scaleX(1.0161);">Custom 404 page</span><span class="t" style="left:407.9px;top:547.0px;font-size:27.5px;font-weight:400;color:#a2a2a2;font-family:'Liberation Sans';transform:scaleX(1.0201);">Custom Maintenance page</span><span class="t" style="left:396.8px;top:1047.4px;font-size:27.5px;font-weight:400;color:#4fae54;font-family:'Liberation Sans';transform:scaleX(1.0071);">New Page</span><span class="t" style="left:394.6px;top:1116.1px;font-size:23.3px;font-weight:400;color:#000;font-family:'Liberation Sans';transform:scaleX(1.0180);">Use Drag and Drop to sort and categorise items</span><span class="t" style="left:1083.2px;top:229.2px;font-size:27.5px;font-weight:400;color:#4caf50;font-family:'Liberation Sans';transform:scaleX(0.9073);">SEO</span><span class="t" style="left:1202.4px;top:229.2px;font-size:27.5px;font-weight:400;color:#4caf50;font-family:'Liberation Sans';transform:scaleX(1.0297);">Background</span><span class="t" style="left:1419.5px;top:229.2px;font-size:27.5px;font-weight:400;color:#555;font-family:'Liberation Sans';transform:scaleX(1.0439);">Scripts</span><span class="t" style="left:1050.4px;top:318.8px;font-size:23.3px;font-weight:400;color:#333;font-family:'Liberation Sans';transform:scaleX(1.0316);">Before &lt;/head&gt;</span><span class="t" style="left:1052.3px;top:580.9px;font-size:23.3px;font-weight:400;color:#333;font-family:'Liberation Sans';transform:scaleX(1.0156);">After &lt;body&gt;</span><span class="t" style="left:1050.4px;top:842.7px;font-size:23.3px;font-weight:400;color:#333;font-family:'Liberation Sans';transform:scaleX(1.0342);">Before &lt;/body&gt;</span>
</div></body></html>
